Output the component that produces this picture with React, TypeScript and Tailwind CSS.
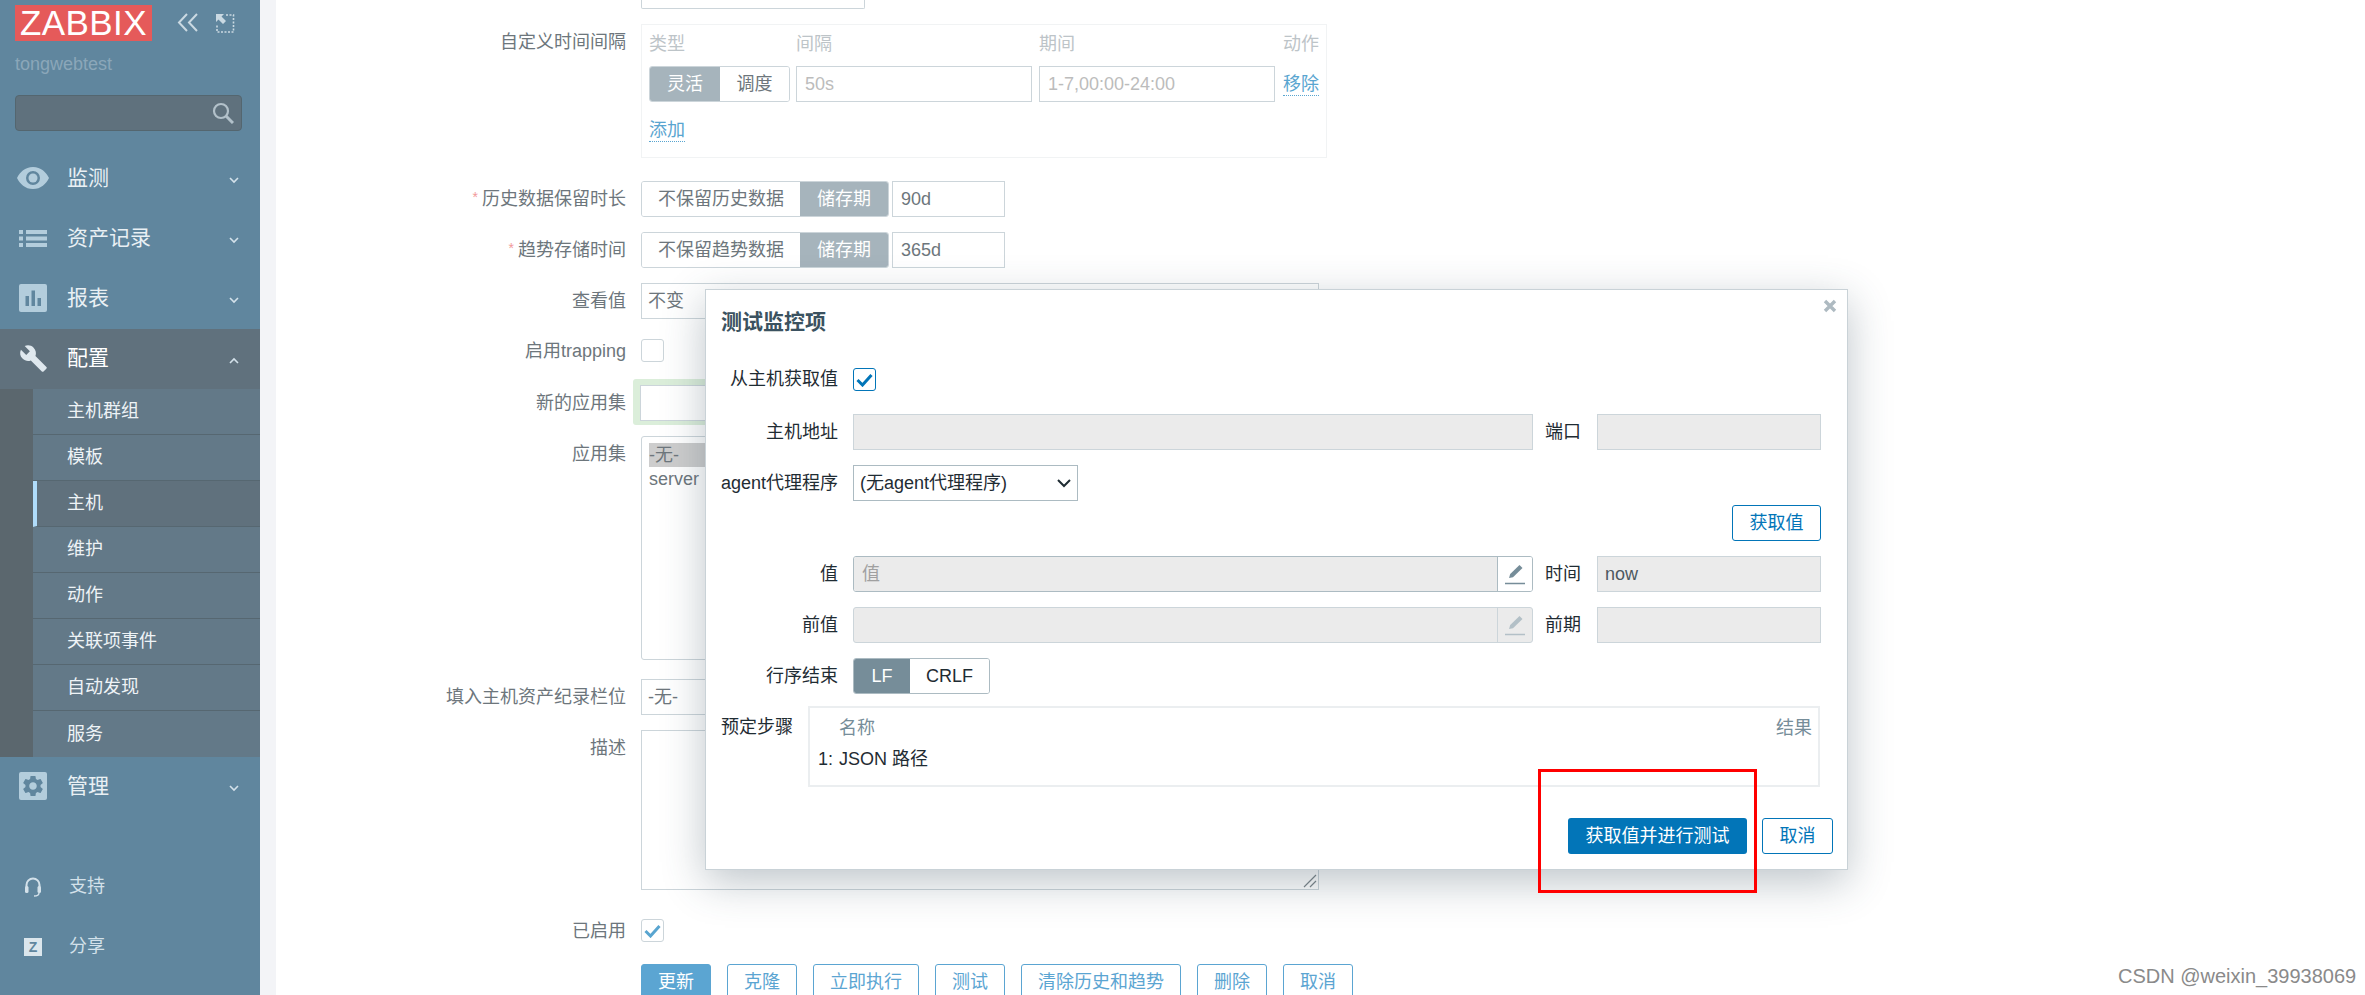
import React from "react";

const FONT = '"Liberation Sans","Noto Sans CJK SC",sans-serif';

function Chevron({ up = false }: { up?: boolean }) {
  return (
    <svg width="10" height="7" viewBox="0 0 10 7" className="ml-auto mr-[21px] mt-[3px]">
      <path d={up ? "M1 6l4-4 4 4" : "M1 1l4 4 4-4"} fill="none" stroke="#d3e1ea" strokeWidth="1.6" />
    </svg>
  );
}

function MenuItem({ icon, label, active = false, up = false }: { icon: React.ReactNode; label: string; active?: boolean; up?: boolean }) {
  return (
    <div className={`flex items-center h-[60px] ${active ? "bg-[#60717d] text-white" : "text-[#e9f0f4]"}`}>
      <div className="w-[67px] flex justify-center pr-[1px] shrink-0 pb-[2px]">{icon}</div>
      <span className="text-[21px] leading-none pb-[3px]">{label}</span>
      <Chevron up={up} />
    </div>
  );
}

function SubItem({ label, current = false }: { label: string; current?: boolean }) {
  return (
    <div className={`h-[46px] flex items-center border-b border-[#566771] text-[18px] text-[#eef3f6] ${current ? "bg-[#60717d] border-l-4 border-l-[#b0dcfa] pl-[30px]" : "pl-[34px]"}`}>
      {label}
    </div>
  );
}

function Sidebar() {
  return (
    <aside className="w-[260px] shrink-0 h-[995px] bg-[#60869e] flex flex-col">
      <div className="flex items-center pl-[15px] pt-[5px]">
        <div className="w-[137px] h-[36px] bg-[#e55a5a] text-white text-[35px] leading-[36px] text-center tracking-[0.4px]">ZABBIX</div>
        <svg width="22" height="20" viewBox="0 0 22 20" className="ml-[25px]">
          <path d="M10 1L2 9.5 10 18M20 1l-8 8.5 8 8.5" fill="none" stroke="#cad9e2" strokeWidth="2" />
        </svg>
        <svg width="20" height="20" viewBox="0 0 20 20" className="ml-[16px]">
          <path d="M11 2h7.5v17H2v-7" fill="none" stroke="#cad9e2" strokeWidth="1.6" strokeDasharray="2 1.5" />
          <path d="M1 1h8L6.5 3.5 11 8 8 11 3.5 6.5 1 9z" fill="#cad9e2" />
        </svg>
      </div>
      <div className="pl-[15px] mt-[13px] text-[18px] leading-[20px] text-[#8ba7b9]">tongwebtest</div>
      <div className="mx-[15px] mt-[21px] h-[36px] w-[227px] bg-[#5f717d] border border-[#54666f] rounded-[4px] flex items-center justify-end pr-[7px]">
        <svg width="22" height="22" viewBox="0 0 22 22">
          <circle cx="9" cy="9" r="7" fill="none" stroke="#b2c1ca" strokeWidth="2.2" />
          <path d="M14 14l7 7" stroke="#b2c1ca" strokeWidth="3" />
        </svg>
      </div>
      <nav className="mt-[18px]">
        <MenuItem label="监测" icon={
          <svg width="32" height="22" viewBox="0 0 32 22">
            <path fillRule="evenodd" d="M16 0C8 0 3 5 0 11c3 6 8 11 16 11s13-5 16-11C29 5 24 0 16 0zm0 4a7 7 0 1 1 0 14 7 7 0 0 1 0-14z" fill="#b3cddc" />
            <circle cx="16" cy="11" r="4.5" fill="#b3cddc" />
          </svg>} />
        <MenuItem label="资产记录" icon={
          <svg width="28" height="17" viewBox="0 0 28 17" fill="#b3cddc">
            <rect x="0" y="0" width="4" height="4" /><rect x="7" y="0" width="21" height="4" />
            <rect x="0" y="6.5" width="4" height="4" /><rect x="7" y="6.5" width="21" height="4" />
            <rect x="0" y="13" width="4" height="4" /><rect x="7" y="13" width="21" height="4" />
          </svg>} />
        <MenuItem label="报表" icon={
          <svg width="28" height="28" viewBox="0 0 28 28">
            <rect width="28" height="28" rx="2" fill="#b3cddc" />
            <rect x="6.5" y="12" width="3.5" height="10" fill="#60869e" />
            <rect x="12.5" y="6.5" width="3.5" height="15.5" fill="#60869e" />
            <rect x="18.5" y="14" width="3.5" height="8" fill="#60869e" />
          </svg>} />
        <MenuItem active up label="配置" icon={
          <svg width="29" height="29" viewBox="0 0 24 24">
            <path d="M22.7 19l-9.1-9.1c.9-2.3.4-5-1.5-6.9-2-2-5-2.4-7.4-1.3L9 6 6 9 1.6 4.7C.4 7.1.9 10.1 2.9 12.1c1.9 1.9 4.6 2.4 6.9 1.5l9.1 9.1c.4.4 1 .4 1.4 0l2.3-2.3c.5-.4.5-1.1.1-1.4z" fill="#dfe8ee" />
          </svg>} />
        <div className="flex bg-[#5b676e]">
          <div className="w-[33px] shrink-0" />
          <div className="flex-1 bg-[#637988]">
            <SubItem label="主机群组" />
            <SubItem label="模板" />
            <SubItem label="主机" current />
            <SubItem label="维护" />
            <SubItem label="动作" />
            <SubItem label="关联项事件" />
            <SubItem label="自动发现" />
            <div className="h-[46px] flex items-center pl-[34px] text-[18px] text-[#eef3f6]">服务</div>
          </div>
        </div>
        <MenuItem label="管理" icon={
          <svg width="28" height="28" viewBox="0 0 28 28">
            <rect width="28" height="28" rx="2" fill="#b3cddc" />
            <g transform="translate(1.4 1.4) scale(1.05)">
              <path d="M19.14 12.94c.04-.3.06-.61.06-.94 0-.32-.02-.64-.07-.94l2.03-1.58a.49.49 0 0 0 .12-.61l-1.92-3.32a.488.488 0 0 0-.59-.22l-2.39.96c-.5-.38-1.03-.7-1.62-.94l-.36-2.54a.484.484 0 0 0-.48-.41h-3.84c-.24 0-.43.17-.47.41l-.36 2.54c-.59.24-1.13.57-1.62.94l-2.39-.96c-.22-.08-.47 0-.59.22L2.74 8.87c-.12.21-.08.47.12.61l2.03 1.58c-.05.3-.09.63-.09.94s.02.64.07.94l-2.03 1.58a.49.49 0 0 0-.12.61l1.92 3.32c.12.22.37.29.59.22l2.39-.96c.5.38 1.03.7 1.62.94l.36 2.54c.05.24.24.41.48.41h3.84c.24 0 .44-.17.47-.41l.36-2.54c.59-.24 1.13-.56 1.62-.94l2.39.96c.22.08.47 0 .59-.22l1.92-3.32c.12-.22.07-.47-.12-.61l-2.01-1.58zM12 15.6c-1.98 0-3.6-1.62-3.6-3.6s1.62-3.6 3.6-3.6 3.6 1.62 3.6 3.6-1.62 3.6-3.6 3.6z" fill="#60869e" />
            </g>
          </svg>} />
      </nav>
      <div className="mt-[40px] flex items-center h-[60px] text-[18px] text-[#d3e1ea]">
        <div className="w-[69px] flex justify-center pr-[3px] shrink-0">
          <svg width="18" height="20" viewBox="0 0 18 20" fill="none">
            <path d="M2.5 11V8a6.5 6.5 0 0 1 13 0v3" stroke="#d3e1ea" strokeWidth="2" />
            <rect x="1" y="9" width="3.5" height="7" rx="1.5" fill="#d3e1ea" />
            <rect x="13.5" y="9" width="3.5" height="7" rx="1.5" fill="#d3e1ea" />
            <path d="M15 16c0 2-2 3-5 3" stroke="#d3e1ea" strokeWidth="1.4" />
          </svg>
        </div>
        <span className="pb-[2px]">支持</span>
      </div>
      <div className="flex items-center h-[60px] text-[18px] text-[#d3e1ea]">
        <div className="w-[69px] flex justify-center pr-[3px] shrink-0">
          <div className="w-[18px] h-[18px] bg-[#dbe6ec] text-[#60869e] text-[14px] leading-[18px] font-bold text-center">Z</div>
        </div>
        <span className="pb-[2px]">分享</span>
      </div>
    </aside>
  );
}

const label = "w-[350px] shrink-0 text-right text-[18px] leading-[36px] text-[#6d767c] mr-[15px]";
const box = "h-[36px] border border-[#ccd5da] bg-white text-[18px] leading-[34px] text-[#6d767c]";

function Req() {
  return <span className="relative top-[-3px] text-[#f29a9a] mr-[4px] text-[14px] leading-none">*</span>;
}

function Seg({ a, b, wa, wb, activeFirst = false }: { a: string; b: string; wa: number; wb: number; activeFirst?: boolean }) {
  const on = "bg-[#a6b4bc] text-white";
  const off = "bg-white text-[#6d767c]";
  return (
    <div className="flex h-[36px] border border-[#ccd5da] rounded-[3px] overflow-hidden text-[18px] leading-[34px] text-center">
      <div style={{ width: wa }} className={activeFirst ? on : off}>{a}</div>
      <div style={{ width: wb }} className={activeFirst ? off : on}>{b}</div>
    </div>
  );
}

function Ck({ checked = false }: { checked?: boolean }) {
  return (
    <div className="w-[23px] h-[23px] border border-[#ccd5da] rounded-[3px] bg-white flex items-center justify-center">
      {checked && (
        <svg width="17" height="14" viewBox="0 0 17 14"><path d="M1.5 7l5 5L15.5 2" fill="none" stroke="#59a5d0" strokeWidth="3" /></svg>
      )}
    </div>
  );
}

function Btn({ t, w, primary = false }: { t: string; w: number; primary?: boolean }) {
  return (
    <div style={{ width: w }} className={`h-[36px] shrink-0 rounded-[3px] border border-[#5ba5d2] text-center text-[18px] leading-[34px] ${primary ? "bg-[#5ba5d2] text-white" : "bg-white text-[#5ba5d2]"}`}>{t}</div>
  );
}

function Form() {
  return (
    <main className="flex-1 ml-[16px] bg-white h-[995px]">
      <div className="ml-[365px] w-[224px] h-[9px] border-x border-b border-[#ccd5da] rounded-b-[2px]" />
      <div className="flex mt-[15px]">
        <div className={label}>自定义时间间隔</div>
        <div className="w-[686px] h-[134px] border border-[#f1f3f4] pl-[7px] pt-[6px]">
          <div className="flex h-[27px] text-[18px] leading-[27px] text-[#bdc4c8]">
            <div className="w-[147px]">类型</div>
            <div className="w-[243px]">间隔</div>
            <div className="w-[244px]">期间</div>
            <div>动作</div>
          </div>
          <div className="flex mt-[8px] items-center">
            <Seg a="灵活" b="调度" wa={70} wb={69} activeFirst />
            <div className={`${box} w-[236px] ml-[6px] px-[8px] text-[#bcbcbc]`}>50s</div>
            <div className={`${box} w-[236px] ml-[7px] px-[8px] text-[#bcbcbc]`}>1-7,00:00-24:00</div>
            <div className="ml-[8px] text-[18px] leading-[22px] text-[#59a5d0] border-b border-dotted border-[#59a5d0]">移除</div>
          </div>
          <div className="mt-[17px] w-fit text-[18px] leading-[22px] text-[#59a5d0] border-b border-dotted border-[#59a5d0]">添加</div>
        </div>
      </div>
      <div className="flex mt-[23px]">
        <div className={label}><Req />历史数据保留时长</div>
        <Seg a="不保留历史数据" b="储存期" wa={158} wb={88} />
        <div className={`${box} w-[113px] ml-[3px] px-[8px]`}>90d</div>
      </div>
      <div className="flex mt-[15px]">
        <div className={label}><Req />趋势存储时间</div>
        <Seg a="不保留趋势数据" b="储存期" wa={158} wb={88} />
        <div className={`${box} w-[113px] ml-[3px] px-[8px]`}>365d</div>
      </div>
      <div className="flex mt-[15px]">
        <div className={label}>查看值</div>
        <div className={`${box} w-[678px] px-[6px]`}>不变</div>
      </div>
      <div className="flex mt-[20px] h-[23px] items-center">
        <div className={label}>启用trapping</div>
        <Ck />
      </div>
      <div className="flex mt-[23px]">
        <div className="w-[350px] shrink-0 text-right text-[18px] leading-[36px] text-[#6d767c] mr-[7px]">新的应用集</div>
        <div className="w-[232px] mt-[-6px] pl-[7px] pt-[6px] pb-[4px] bg-[#dbeeda] rounded-[3px]">
          <div className={box} />
        </div>
      </div>
      <div className="flex mt-[11px]">
        <div className={label}>应用集</div>
        <div className="w-[678px] h-[224px] border border-[#ccd5da] rounded-[3px] pl-[7px] pt-[6px] text-[18px] leading-[24px] text-[#6d767c]">
          <div className="bg-[#cdcdcd]">-无-</div>
          <div>server</div>
        </div>
      </div>
      <div className="flex mt-[19px]">
        <div className={label}>填入主机资产纪录栏位</div>
        <div className={`${box} w-[224px] px-[6px]`}>-无-</div>
      </div>
      <div className="flex mt-[15px]">
        <div className={label}>描述</div>
        <div className="relative w-[678px] h-[160px] border border-[#ccd5da]">
          <svg width="14" height="14" viewBox="0 0 14 14" className="absolute right-[1px] bottom-[1px]">
            <path d="M1 13L13 1M7 13l6-6" stroke="#7d868b" strokeWidth="1.2" />
          </svg>
        </div>
      </div>
      <div className="flex mt-[29px] h-[23px] items-center">
        <div className={label}>已启用</div>
        <Ck checked />
      </div>
      <div className="flex ml-[365px] mt-[22px] gap-[16px]">
        <Btn t="更新" w={70} primary />
        <Btn t="克隆" w={70} />
        <Btn t="立即执行" w={106} />
        <Btn t="测试" w={70} />
        <Btn t="清除历史和趋势" w={160} />
        <Btn t="删除" w={70} />
        <Btn t="取消" w={70} />
      </div>
    </main>
  );
}

const mLabel = "w-[117px] shrink-0 text-right text-[18px] text-[#1f2c33] mr-[15px] whitespace-nowrap";
const dis = "h-[36px] border border-[#ccd5da] bg-[#ebebeb] text-[18px] leading-[34px] px-[7px] text-[#4d5860]";

function Pencil({ c }: { c: string }) {
  return (
    <svg width="22" height="22" viewBox="0 0 22 22">
      <path d="M5 15l1.2-4L15.5 2l3 3L9 14.3z" fill={c} />
      <path d="M1 20.5h20" stroke={c} strokeWidth="1.6" />
    </svg>
  );
}

function Modal() {
  return (
    <div className="absolute left-[705px] top-[289px] w-[1143px] h-[581px] bg-white border border-[#c9d2d7] shadow-[0_12px_40px_rgba(52,74,90,0.32)] pl-[15px] pt-[17px]">
      <div className="text-[21px] leading-[30px] font-bold text-[#3b5260]">测试监控项</div>
      <svg width="14" height="14" viewBox="0 0 14 14" className="absolute right-[10px] top-[9px]">
        <path d="M2 2l10 10M12 2L2 12" stroke="#aebac1" strokeWidth="3.4" />
      </svg>

      <div className="flex items-center mt-[31px] h-[23px]">
        <div className={mLabel}>从主机获取值</div>
        <div className="w-[23px] h-[23px] border border-[#0275b8] rounded-[3px] flex items-center justify-center">
          <svg width="17" height="14" viewBox="0 0 17 14"><path d="M1.5 7l5 5L15.5 2" fill="none" stroke="#0275b8" strokeWidth="3" /></svg>
        </div>
      </div>

      <div className="flex items-center mt-[23px]">
        <div className={mLabel}>主机地址</div>
        <div className={`${dis} w-[680px]`} />
        <div className="w-[52px] ml-[12px] text-[18px] text-[#1f2c33]">端口</div>
        <div className={`${dis} w-[224px]`} />
      </div>

      <div className="flex items-center mt-[15px]">
        <div className={mLabel}>agent代理程序</div>
        <div className="relative">
          <select className="block appearance-none h-[36px] w-[225px] border border-[#acbbc2] bg-white text-[18px] text-[#1f2c33] pl-[6px]" defaultValue="a">
            <option value="a">(无agent代理程序)</option>
          </select>
          <svg width="14" height="9" viewBox="0 0 14 9" className="absolute right-[7px] top-[14px]">
            <path d="M1 1l6 6 6-6" fill="none" stroke="#1f2c33" strokeWidth="2" />
          </svg>
        </div>
      </div>

      <div className="flex justify-end w-[1100px] mt-[4px]">
        <div className="w-[89px] h-[36px] border border-[#0275b8] rounded-[3px] text-center text-[18px] leading-[34px] text-[#0275b8]">获取值</div>
      </div>

      <div className="flex items-center mt-[15px]">
        <div className={mLabel}>值</div>
        <div className="flex w-[680px] h-[36px] border border-[#acbbc2] rounded-[3px] overflow-hidden">
          <div className="flex-1 bg-[#ebebeb] border-r border-[#acbbc2] px-[8px] text-[18px] leading-[34px] text-[#a0a0a0]">值</div>
          <div className="w-[34px] flex items-center justify-center bg-white"><Pencil c="#768d99" /></div>
        </div>
        <div className="w-[52px] ml-[12px] text-[18px] text-[#1f2c33]">时间</div>
        <div className={`${dis} w-[224px]`}>now</div>
      </div>

      <div className="flex items-center mt-[15px]">
        <div className={mLabel}>前值</div>
        <div className="flex w-[680px] h-[36px] border border-[#ccd5da] rounded-[3px] overflow-hidden bg-[#ebebeb]">
          <div className="flex-1 border-r border-[#ccd5da]" />
          <div className="w-[34px] flex items-center justify-center"><Pencil c="#b3c0c7" /></div>
        </div>
        <div className="w-[52px] ml-[12px] text-[18px] text-[#1f2c33]">前期</div>
        <div className={`${dis} w-[224px]`} />
      </div>

      <div className="flex items-center mt-[15px]">
        <div className={mLabel}>行序结束</div>
        <div className="flex h-[36px] border border-[#acbbc2] rounded-[3px] overflow-hidden text-[18px] leading-[34px] text-center">
          <div className="w-[56px] bg-[#768d99] text-white">LF</div>
          <div className="w-[79px] bg-white text-[#1f2c33]">CRLF</div>
        </div>
      </div>

      <div className="flex mt-[12px]">
        <div className="w-[87px] shrink-0 text-[18px] leading-[42px] text-[#1f2c33]">预定步骤</div>
        <div className="w-[1012px] h-[81px] border-2 border-[#ebeef0] pl-[8px] pr-[6px] pt-[4px] text-[18px]">
          <div className="flex justify-between h-[32px] leading-[32px] text-[#768d99] pl-[21px]">
            <span>名称</span><span>结果</span>
          </div>
          <div className="flex leading-[30px] text-[#1f2c33]">
            <span className="w-[21px]">1:</span><span>JSON 路径</span>
          </div>
        </div>
      </div>

      <div className="flex justify-end w-[1112px] mt-[31px] gap-[15px]">
        <div className="w-[179px] h-[36px] bg-[#0275b8] rounded-[3px] text-center text-[18px] leading-[36px] text-white">获取值并进行测试</div>
        <div className="w-[71px] h-[36px] border border-[#0275b8] rounded-[3px] text-center text-[18px] leading-[34px] text-[#0275b8]">取消</div>
      </div>
    </div>
  );
}

export default function App() {
  return (
    <div className="relative flex w-[2365px] h-[995px] overflow-hidden bg-[#f3f4f7]" style={{ fontFamily: FONT }}>
      <Sidebar />
      <Form />
      <Modal />
      <div className="absolute left-[1538px] top-[769px] w-[219px] h-[124px] border-[3px] border-[#ff0000]" />
      <div className="absolute left-[2118px] top-[964px] text-[20px] leading-[24px] text-[#8a8a8a] whitespace-nowrap">CSDN @weixin_39938069</div>
    </div>
  );
}
